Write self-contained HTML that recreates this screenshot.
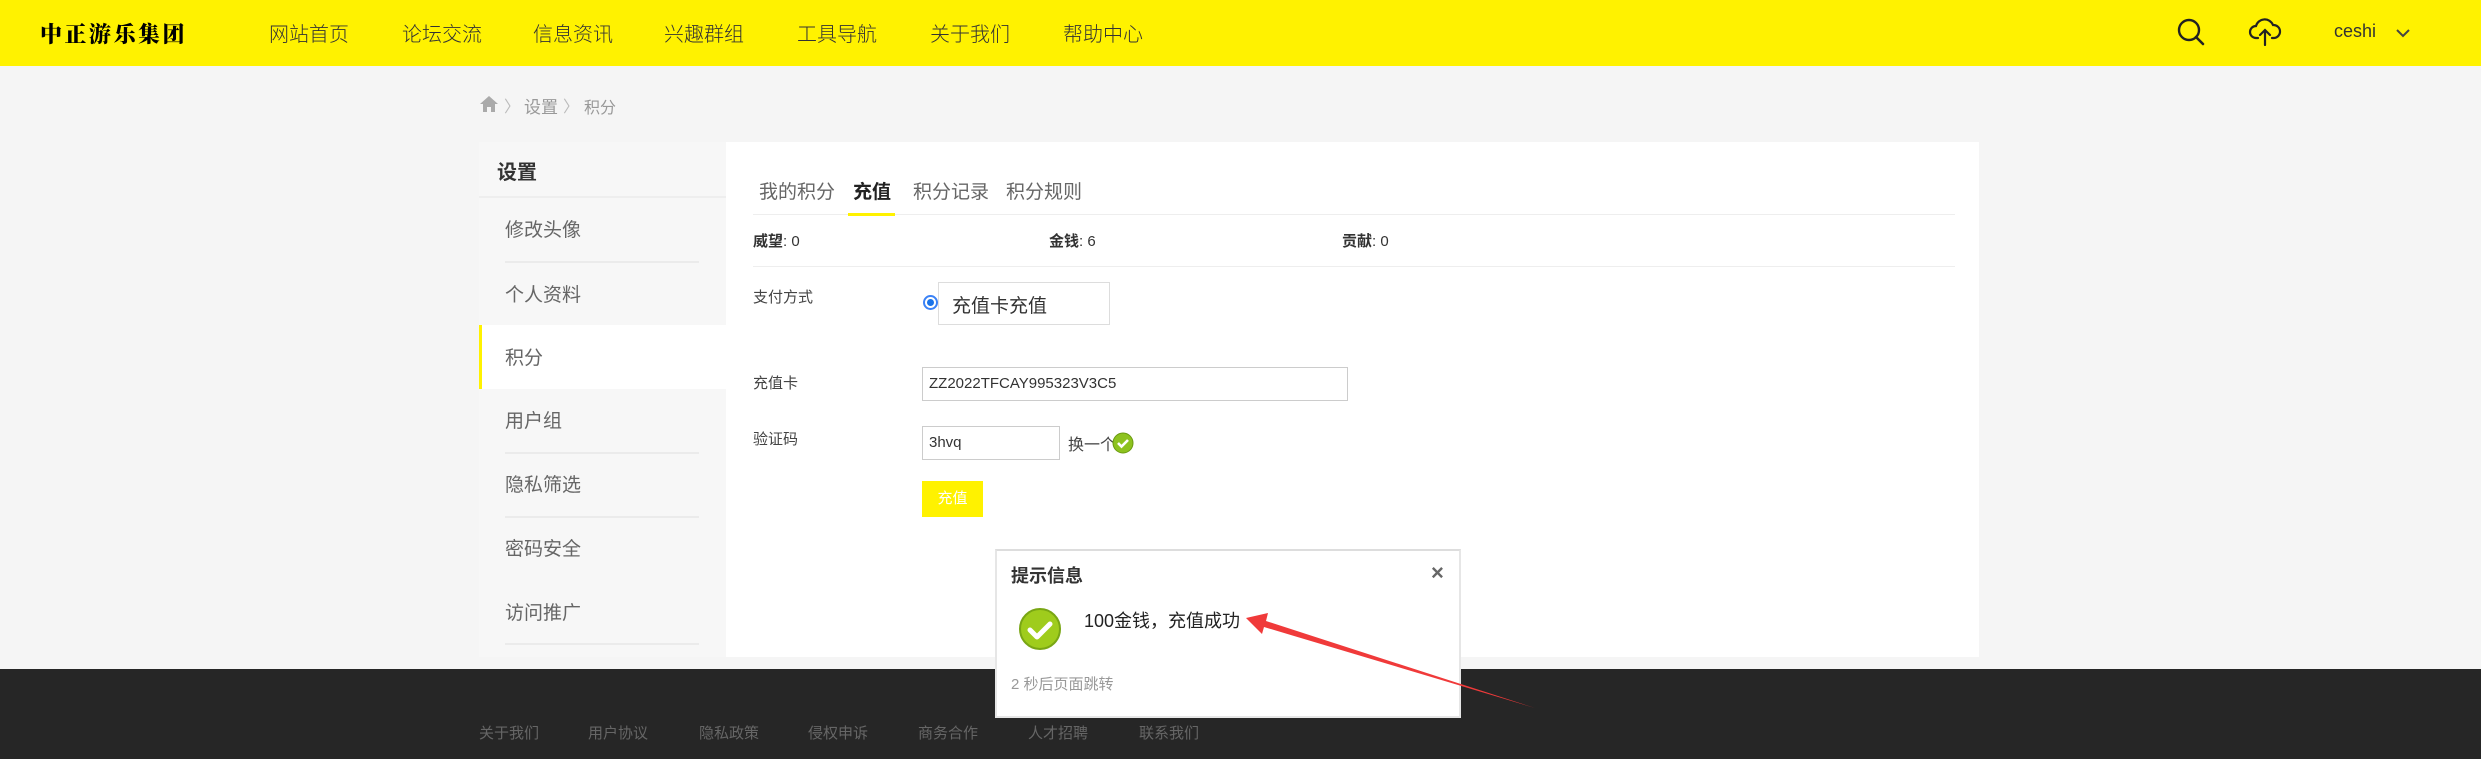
<!DOCTYPE html>
<html><head><meta charset="utf-8"><style>
*{margin:0;padding:0;box-sizing:border-box}
body{width:2481px;height:759px;position:relative;overflow:hidden;background:#f5f5f5;font-family:"Liberation Sans","Noto Sans CJK SC",sans-serif;color:#333}
.a{position:absolute;white-space:nowrap}
#hd{left:0;top:0;width:2481px;height:66px;background:#fff200}
.nav{font-size:20px;color:#333;top:18px;font-weight:300}
.side{left:479px;top:142px;width:247px;height:515px;background:#f7f7f7}
.main{left:726px;top:142px;width:1253px;height:515px;background:#fff}
.si{font-size:19px;color:#666;left:505px}
.sep{height:2px;background:#ebebeb;left:505px;width:194px}
.tab{font-size:19px;color:#666;top:177px}
.lbl{font-size:15px;color:#444;left:753px}
.inp{border:1px solid #ccc;background:#fff;font-size:16px;color:#333;padding-left:6px;line-height:31px}
#ft{left:0;top:669px;width:2481px;height:90px;background:#262626}
.fl{font-size:15px;color:#666;top:722px}
</style></head><body>
<div id="hd" class="a"></div>
<div class="a" style="left:40px;top:18px;font-size:22px;font-weight:900;letter-spacing:2.5px;color:#000;font-family:'Noto Serif CJK SC',serif">中正游乐集团</div>
<div class="a nav" style="left:269px">网站首页</div>
<div class="a nav" style="left:402px">论坛交流</div>
<div class="a nav" style="left:533px">信息资讯</div>
<div class="a nav" style="left:664px">兴趣群组</div>
<div class="a nav" style="left:797px">工具导航</div>
<div class="a nav" style="left:930px">关于我们</div>
<div class="a nav" style="left:1063px">帮助中心</div>
<svg class="a" style="left:2176px;top:16px" width="30" height="32" viewBox="0 0 30 32"><circle cx="13" cy="14" r="10" fill="none" stroke="#222" stroke-width="2.4"/><path d="M20 21l7 7" stroke="#222" stroke-width="2.6" stroke-linecap="round"/></svg>
<svg class="a" style="left:2248px;top:16px" width="34" height="30" viewBox="0 0 34 30"><path d="M10 22H8a6 6 0 0 1 0-12 9 9 0 0 1 17-1 6.5 6.5 0 0 1 1 13h-2" fill="none" stroke="#222" stroke-width="2.2" stroke-linecap="round"/><path d="M17 29V14M12 19l5-5 5 5" fill="none" stroke="#222" stroke-width="2.2" stroke-linecap="round"/></svg>
<div class="a" style="left:2334px;top:21px;font-size:18px;color:#333">ceshi</div>
<svg class="a" style="left:2396px;top:29px" width="14" height="9" viewBox="0 0 14 9"><path d="M1 1l6 6 6-6" fill="none" stroke="#444" stroke-width="2"/></svg>

<svg class="a" style="left:479px;top:95px" width="20" height="18" viewBox="0 0 20 18"><path d="M10 1L1 9h3v8h4v-5h4v5h4V9h3z" fill="#aaa"/></svg>
<div class="a" style="left:504px;top:93px;font-size:16px;color:#bbb">〉</div>
<div class="a" style="left:524px;top:93px;font-size:17px;color:#999">设置</div>
<div class="a" style="left:563px;top:93px;font-size:16px;color:#bbb">〉</div>
<div class="a" style="left:584px;top:94px;font-size:16px;color:#999">积分</div>

<div class="a side"></div>
<div class="a main"></div>
<div class="a" style="left:497px;top:156px;font-size:20px;font-weight:bold;color:#333">设置</div>
<div class="a" style="left:479px;top:196px;width:247px;height:2px;background:#eee"></div>
<div class="a si" style="top:215px">修改头像</div>
<div class="a sep" style="top:261px"></div>
<div class="a si" style="top:280px">个人资料</div>
<div class="a" style="left:479px;top:325px;width:247px;height:64px;background:#fff;border-left:3px solid #fff200"></div>
<div class="a si" style="top:343px">积分</div>
<div class="a si" style="top:406px">用户组</div>
<div class="a sep" style="top:452px"></div>
<div class="a si" style="top:470px">隐私筛选</div>
<div class="a sep" style="top:516px"></div>
<div class="a si" style="top:534px">密码安全</div>
<div class="a si" style="top:598px">访问推广</div>
<div class="a sep" style="top:643px"></div>

<div class="a tab" style="left:759px">我的积分</div>
<div class="a tab" style="left:853px;font-weight:bold;color:#222">充值</div>
<div class="a tab" style="left:913px">积分记录</div>
<div class="a tab" style="left:1006px">积分规则</div>
<div class="a" style="left:753px;top:214px;width:1202px;height:1px;background:#eee"></div>
<div class="a" style="left:848px;top:213px;width:47px;height:3px;background:#fff200"></div>
<div class="a" style="left:753px;top:230px;font-size:15px"><b>威望</b>: 0</div>
<div class="a" style="left:1049px;top:230px;font-size:15px"><b>金钱</b>: 6</div>
<div class="a" style="left:1342px;top:230px;font-size:15px"><b>贡献</b>: 0</div>
<div class="a" style="left:753px;top:266px;width:1202px;height:1px;background:#eee"></div>

<div class="a lbl" style="top:286px">支付方式</div>
<div class="a" style="left:923px;top:295px;width:15px;height:15px;border-radius:50%;border:2px solid #3b82f6;background:#fff"><div style="margin:2px;width:7px;height:7px;border-radius:50%;background:#1a73e8"></div></div>
<div class="a" style="left:938px;top:282px;width:172px;height:43px;border:1px solid #ddd;font-size:19px;padding:8px 0 0 13px;color:#333">充值卡充值</div>

<div class="a lbl" style="top:372px">充值卡</div>
<div class="a inp" style="left:922px;top:367px;width:426px;height:34px;font-size:15px">ZZ2022TFCAY995323V3C5</div>
<div class="a lbl" style="top:428px">验证码</div>
<div class="a inp" style="left:922px;top:426px;width:138px;height:34px;font-size:15px">3hvq</div>
<div class="a" style="left:1068px;top:431px;font-size:16px;color:#444">换一个</div>
<svg class="a" style="left:1112px;top:432px" width="22" height="22" viewBox="0 0 22 22"><circle cx="11" cy="11" r="10" fill="#8dc21f" stroke="#6a9a10"/><path d="M6 11l3.5 3.5L16 8" fill="none" stroke="#fff" stroke-width="2.6"/></svg>
<div class="a" style="left:922px;top:481px;width:61px;height:36px;background:#fff200;color:#fff;font-size:15px;line-height:36px;text-align:center">充值</div>

<div id="ft" class="a"></div>
<div class="a fl" style="left:479px">关于我们</div>
<div class="a fl" style="left:588px">用户协议</div>
<div class="a fl" style="left:699px">隐私政策</div>
<div class="a fl" style="left:808px">侵权申诉</div>
<div class="a fl" style="left:918px">商务合作</div>
<div class="a fl" style="left:1028px">人才招聘</div>
<div class="a fl" style="left:1139px">联系我们</div>

<div class="a" style="left:995px;top:549px;width:466px;height:169px;background:#fff;border:2px solid #e6e6e6;border-top-color:#ddd"></div>
<div class="a" style="left:1011px;top:562px;font-size:18px;font-weight:bold;color:#333">提示信息</div>
<div class="a" style="left:1431px;top:560px;font-size:22px;font-weight:bold;color:#666">×</div>
<svg class="a" style="left:1018px;top:607px" width="44" height="44" viewBox="0 0 44 44"><circle cx="22" cy="22" r="20" fill="#9fcc1c" stroke="#79a614" stroke-width="2"/><path d="M12 23l7 7 13-13" fill="none" stroke="#fff" stroke-width="5" stroke-linecap="round" stroke-linejoin="round"/></svg>
<div class="a" style="left:1084px;top:607px;font-size:18px;color:#222">100金钱，充值成功</div>
<div class="a" style="left:1011px;top:673px;font-size:15px;color:#999">2 秒后页面跳转</div>

<svg class="a" style="left:0;top:0" width="2481" height="759" viewBox="0 0 2481 759"><path d="M1246 618L1262 634L1264 627L1535 708L1266 621L1268 613Z" fill="#f03a3a"/></svg>
</body></html>
